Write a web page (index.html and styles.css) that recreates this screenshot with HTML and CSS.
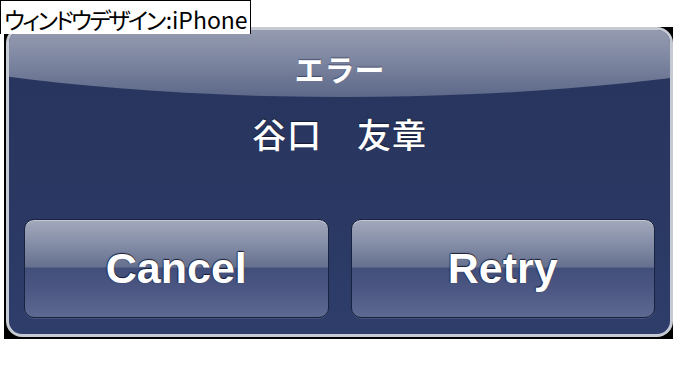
FILE: index.html
```html
<!DOCTYPE html>
<html lang="ja">
<head>
<meta charset="utf-8">
<title>ウィンドウデザイン:iPhone</title>
<link rel="stylesheet" href="styles.css">
</head>
<body>
<div class="page">
  <div class="caption"><span class="kana">ウィンドウデザイン</span>:iPhone</div>
  <div class="frame">
    <div class="dialog">
      <div class="title">エラー</div>
      <div class="message">谷口　友章</div>
      <div class="buttons">
        <div class="btn">Cancel</div>
        <div class="btn">Retry</div>
      </div>
    </div>
  </div>
</div>
</body>
</html>
```
FILE: styles.css
```css
html, body {
  margin: 0;
  padding: 0;
  background: #ffffff;
}
.page {
  position: relative;
  width: 680px;
  height: 368px;
}
.caption {
  position: absolute;
  top: 0;
  left: 0;
  z-index: 2;
  height: 34px;
  box-sizing: border-box;
  padding: 4px 2px 0 3px;
  background: #ffffff;
  border: 1px solid #000000;
  border-bottom: none;
  font-family: "Noto Sans CJK JP", "Noto Sans", sans-serif;
  font-feature-settings: "palt";
  font-size: 23px;
  line-height: 28px;
  color: #000000;
  white-space: nowrap;
}
.kana {
  letter-spacing: -2.5px;
  margin-right: 2px;
}
.frame {
  position: absolute;
  top: 27px;
  left: 4px;
  width: 669px;
  height: 312px;
  box-sizing: border-box;
  padding: 0 0 2px 2px;
  background: #000000;
}
.dialog {
  position: relative;
  height: 100%;
  box-sizing: border-box;
  border: 3px solid #c6cad3;
  border-radius: 16px;
  overflow: hidden;
  background: linear-gradient(to bottom, #27345c 0%, #2a3863 60%, #2e3d6a 100%);
  display: flex;
  flex-direction: column;
  align-items: center;
  font-family: "Noto Sans CJK JP", "Noto Sans", sans-serif;
  color: #ffffff;
}
.dialog::before {
  content: "";
  position: absolute;
  left: -335px;
  top: -235px;
  width: 1340px;
  height: 302px;
  border-radius: 50%;
  background: linear-gradient(to bottom, #979db1 77%, #7d86a0 88%, #5d6889 100%);
}
.title {
  position: relative;
  margin-top: 20px;
  font-size: 30px;
  line-height: 36px;
  font-weight: 700;
  text-shadow: 0 -1px 1px rgba(20, 28, 60, 0.5);
}
.message {
  position: relative;
  margin-top: 28px;
  font-size: 34px;
  line-height: 40px;
  font-weight: 500;
  letter-spacing: 1px;
  text-shadow: 0 -1px 1px rgba(0, 0, 0, 0.5);
}
.buttons {
  position: relative;
  margin-top: auto;
  margin-bottom: 16px;
  align-self: stretch;
  padding: 0 15px;
  display: flex;
  gap: 22px;
}
.btn {
  flex: 1;
  height: 99px;
  box-sizing: border-box;
  border: 1px solid #19223f;
  border-radius: 10px;
  background: linear-gradient(to bottom, #a3a9bc 0%, #8891a9 22%, #66718f 48%, #434f7b 50%, #4b5782 70%, #5d6991 100%);
  box-shadow: inset 0 1px 0 rgba(255, 255, 255, 0.35), 0 1px 0 rgba(255, 255, 255, 0.12);
  display: flex;
  align-items: center;
  justify-content: center;
  font-family: "Liberation Sans", Arial, sans-serif;
  font-weight: 700;
  font-size: 43px;
  color: #ffffff;
  text-shadow: 0 -1px 1px rgba(10, 14, 35, 0.85), -1px 0 1px rgba(10, 14, 35, 0.5);
}
```
